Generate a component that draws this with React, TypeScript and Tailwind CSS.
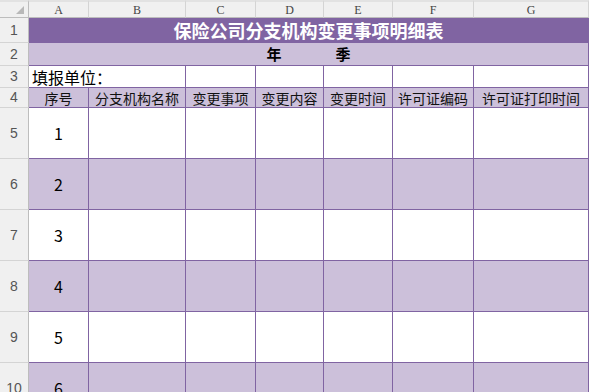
const COLS = ["A", "B", "C", "D", "E", "F", "G"];
const HEADS = ["序号", "分支机构名称", "变更事项", "变更内容", "变更时间", "许可证编码", "许可证打印时间"];
const DATA_ROWS = [1, 2, 3, 4, 5, 6];

const cjk = "font-['Noto_Sans_CJK_SC','Noto_Sans',sans-serif]";
const cell = "border-r border-b border-[#8064a2] flex items-center justify-center min-w-0";

function RowHead({ n }: { n: number }) {
  return (
    <div className="flex items-center justify-center border-r border-b border-r-[#bdbdbd] border-b-[#d4d4d4] bg-[#f0f0f0] text-[14px] text-[#555] font-['Liberation_Sans',sans-serif]">
      {n}
    </div>
  );
}

export default function App() {
  return (
    <div className={`h-[392px] w-[589px] overflow-hidden bg-white ${cjk}`}>
      <div className="grid grid-cols-[29px_60px_97px_70px_68px_69px_81px_115px] grid-rows-[18px_25px_23px_22px_20px_51px_51px_51px_51px_51px_51px]">
        {/* column headers */}
        <div className="relative border-r border-b border-r-[#bdbdbd] border-b-[#bdbdbd] bg-[#f0f0f0] border-t-2 border-t-[#e2e2e2]">
          <svg className="absolute right-[4px] bottom-[3px]" width="8" height="8" viewBox="0 0 8 8">
            <polygon points="8,0 8,8 0,8" fill="#b8b8b8" />
          </svg>
        </div>
        {COLS.map((c) => (
          <div
            key={c}
            className="flex items-center justify-center border-r border-b border-r-[#d4d4d4] border-b-[#bdbdbd] border-t-2 border-t-[#e2e2e2] bg-[#f0f0f0] text-[12px] text-[#444] font-['Liberation_Serif',serif]"
          >
            {c}
          </div>
        ))}

        {/* row 1 title */}
        <RowHead n={1} />
        <div className={`col-span-7 ${cell} bg-[#8064a2] text-[18px] font-bold text-white`}>
          保险公司分支机构变更事项明细表
        </div>

        {/* row 2 */}
        <RowHead n={2} />
        <div className={`col-span-7 ${cell} gap-[54px] bg-[#ccc0da] text-[15px] font-bold text-black`}>
          <span>年</span>
          <span>季</span>
        </div>

        {/* row 3 */}
        <RowHead n={3} />
        <div className={`col-span-2 ${cell} !justify-start pl-[3px] text-[16px] text-black`}>填报单位：</div>
        {[0, 1, 2, 3, 4].map((i) => (
          <div key={i} className={cell} />
        ))}

        {/* row 4 headers */}
        <RowHead n={4} />
        {HEADS.map((h) => (
          <div key={h} className={`${cell} bg-[#ccc0da] text-[14px] leading-none text-[#111] whitespace-nowrap`}>
            {h}
          </div>
        ))}

        {/* data rows */}
        {DATA_ROWS.map((n) => {
          const bg = n % 2 === 0 ? "bg-[#ccc0da]" : "bg-white";
          return [
            <RowHead key={`h${n}`} n={n + 4} />,
            <div key={`a${n}`} className={`${cell} ${bg} text-[16px] text-black`}>
              {n}
            </div>,
            ...[0, 1, 2, 3, 4, 5].map((i) => <div key={`c${n}-${i}`} className={`${cell} ${bg}`} />),
          ];
        })}
      </div>
    </div>
  );
}
